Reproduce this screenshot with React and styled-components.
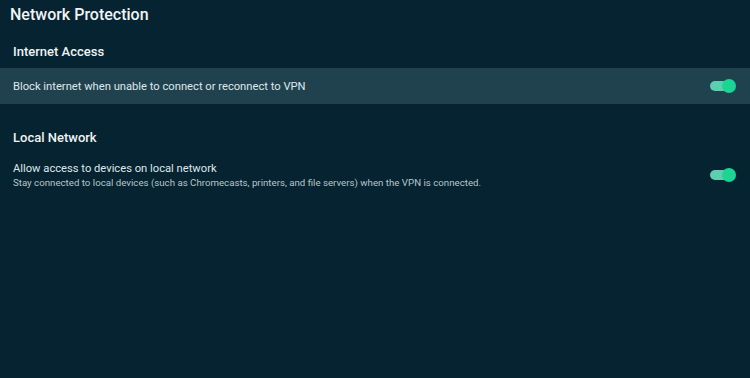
import React from "react";
import styled, { createGlobalStyle } from "styled-components";

const GlobalStyle = createGlobalStyle`
  html, body {
    margin: 0;
    padding: 0;
    background: #052330;
  }
  body {
    font-family: Roboto, "Noto Sans", sans-serif;
    color: #e8eef0;
  }
`;

const Page = styled.div`
  width: 750px;
  height: 378px;
  background: #052330;
  padding-top: 5px;
  box-sizing: border-box;
`;

const Title = styled.h1`
  margin: 0;
  padding: 0 10px;
  font-size: 16px;
  font-weight: 500;
  line-height: 20px;
  color: #f0f4f5;
`;

const Section = styled.section`
  margin-top: ${(p) => p.$gap}px;
`;

const SectionTitle = styled.h2`
  margin: 0;
  padding: 0 13px;
  font-size: 13px;
  font-weight: 500;
  line-height: 18px;
  color: #eef3f4;
`;

const Row = styled.div`
  display: flex;
  align-items: center;
  justify-content: space-between;
  box-sizing: border-box;
  height: 36px;
  margin-top: ${(p) => p.$top}px;
  padding: 0 14px 0 13px;
  background: ${(p) => (p.$focused ? "#20424f" : "transparent")};
`;

const Texts = styled.div`
  display: flex;
  flex-direction: column;
`;

const Label = styled.div`
  font-size: 11.2px;
  line-height: 15px;
  color: #dfe7ea;
`;

const Sub = styled.div`
  font-size: 9.7px;
  line-height: 13px;
  color: #b8c6cc;
`;

const Switch = styled.div`
  position: relative;
  width: 26px;
  height: 14px;
  flex-shrink: 0;
`;

const Track = styled.div`
  position: absolute;
  left: 0;
  top: 2px;
  width: 22px;
  height: 10px;
  border-radius: 5px;
  background: #5ccfae;
`;

const Thumb = styled.div`
  position: absolute;
  right: 0;
  top: 0;
  width: 14px;
  height: 14px;
  border-radius: 50%;
  background: #1bd595;
`;

const Toggle = () => (
  <Switch>
    <Track />
    <Thumb />
  </Switch>
);

export default function App() {
  return (
    <Page>
      <GlobalStyle />
      <Title>Network Protection</Title>
      <Section $gap={18}>
        <SectionTitle>Internet Access</SectionTitle>
        <Row $focused $top={7}>
          <Label>Block internet when unable to connect or reconnect to VPN</Label>
          <Toggle />
        </Row>
      </Section>
      <Section $gap={25}>
        <SectionTitle>Local Network</SectionTitle>
        <Row $top={10}>
          <Texts>
            <Label>Allow access to devices on local network</Label>
            <Sub>
              Stay connected to local devices (such as Chromecasts, printers, and
              file servers) when the VPN is connected.
            </Sub>
          </Texts>
          <Toggle />
        </Row>
      </Section>
    </Page>
  );
}
